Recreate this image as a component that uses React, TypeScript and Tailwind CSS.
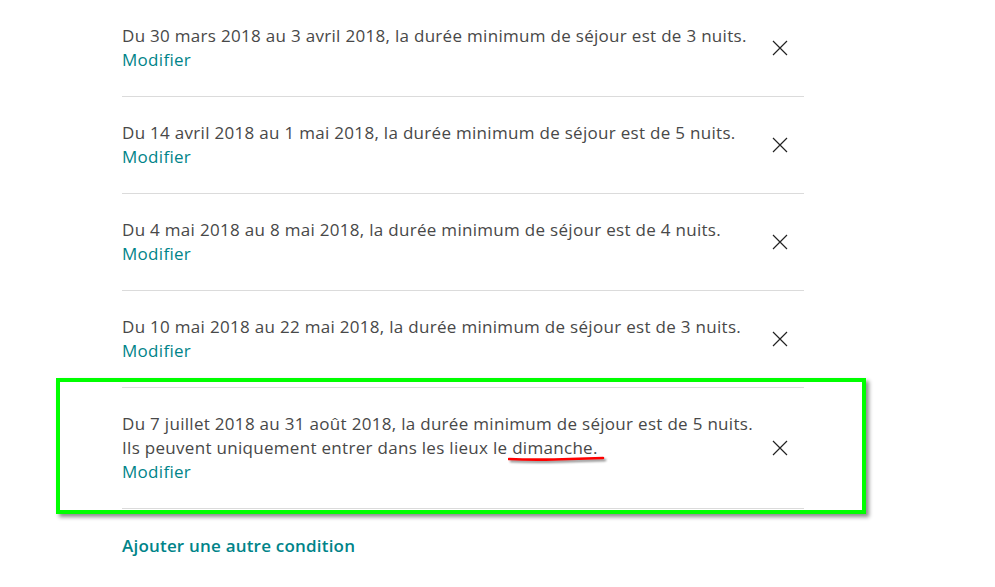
import React from 'react';

type Rule = { text: string; extra?: boolean };

const rules: Rule[] = [
  { text: 'Du 30 mars 2018 au 3 avril 2018, la durée minimum de séjour est de 3 nuits.' },
  { text: 'Du 14 avril 2018 au 1 mai 2018, la durée minimum de séjour est de 5 nuits.' },
  { text: 'Du 4 mai 2018 au 8 mai 2018, la durée minimum de séjour est de 4 nuits.' },
  { text: 'Du 10 mai 2018 au 22 mai 2018, la durée minimum de séjour est de 3 nuits.' },
  { text: 'Du 7 juillet 2018 au 31 août 2018, la durée minimum de séjour est de 5 nuits.', extra: true },
];

const CloseIcon = () => (
  <svg width="16" height="16" viewBox="0 0 16 16" fill="none" stroke="#222" strokeWidth="1.2">
    <path d="M1 1 L15 15 M15 1 L1 15" />
  </svg>
);

const RuleRow: React.FC<{ rule: Rule; first: boolean }> = ({ rule, first }) => (
  <div className={`flex items-center py-6 ${first ? '' : 'border-t border-[#dbdbdb]'}`}>
    <div className="flex-1 min-w-0 whitespace-nowrap text-[17px] leading-6 tracking-[0.3px] text-[#484848]">
      <div>{rule.text}</div>
      {rule.extra && (
        <div>
          Ils peuvent uniquement entrer dans les lieux le{' '}
          <span className="relative">
            dimanche.
            <svg
              className="absolute left-[-4px] top-[20px] drop-shadow-[2px_2px_1px_rgba(0,0,0,0.45)]"
              width="98"
              height="8"
              viewBox="0 0 98 8"
            >
              <path d="M1 3 Q20 4 46 3.5 L95 2" stroke="#ff0000" strokeWidth="2.6" fill="none" strokeLinecap="round" />
            </svg>
          </span>
        </div>
      )}
      <div className="text-[#008489]">Modifier</div>
    </div>
    <div className="pr-4 pl-6 flex items-center shrink-0">
      <CloseIcon />
    </div>
  </div>
);

export default function App() {
  return (
    <div className="w-[995px] h-[587px] bg-white overflow-hidden" style={{ fontFamily: '"Open Sans", "Liberation Sans", sans-serif' }}>
      <div className="relative ml-[122px] w-[682px]">
        {rules.map((r, i) => (
          <RuleRow key={i} rule={r} first={i === 0} />
        ))}
        <div className="border-t border-[#dbdbdb] pt-6 text-[17px] tracking-[0.2px] font-semibold text-[#008489]">
          Ajouter une autre condition
        </div>
        <div className="absolute left-[-66px] top-[378px] w-[810px] h-[136px] border-4 border-[#00ff00] shadow-[3px_3px_4px_rgba(0,0,0,0.45)] pointer-events-none" />
      </div>
    </div>
  );
}
